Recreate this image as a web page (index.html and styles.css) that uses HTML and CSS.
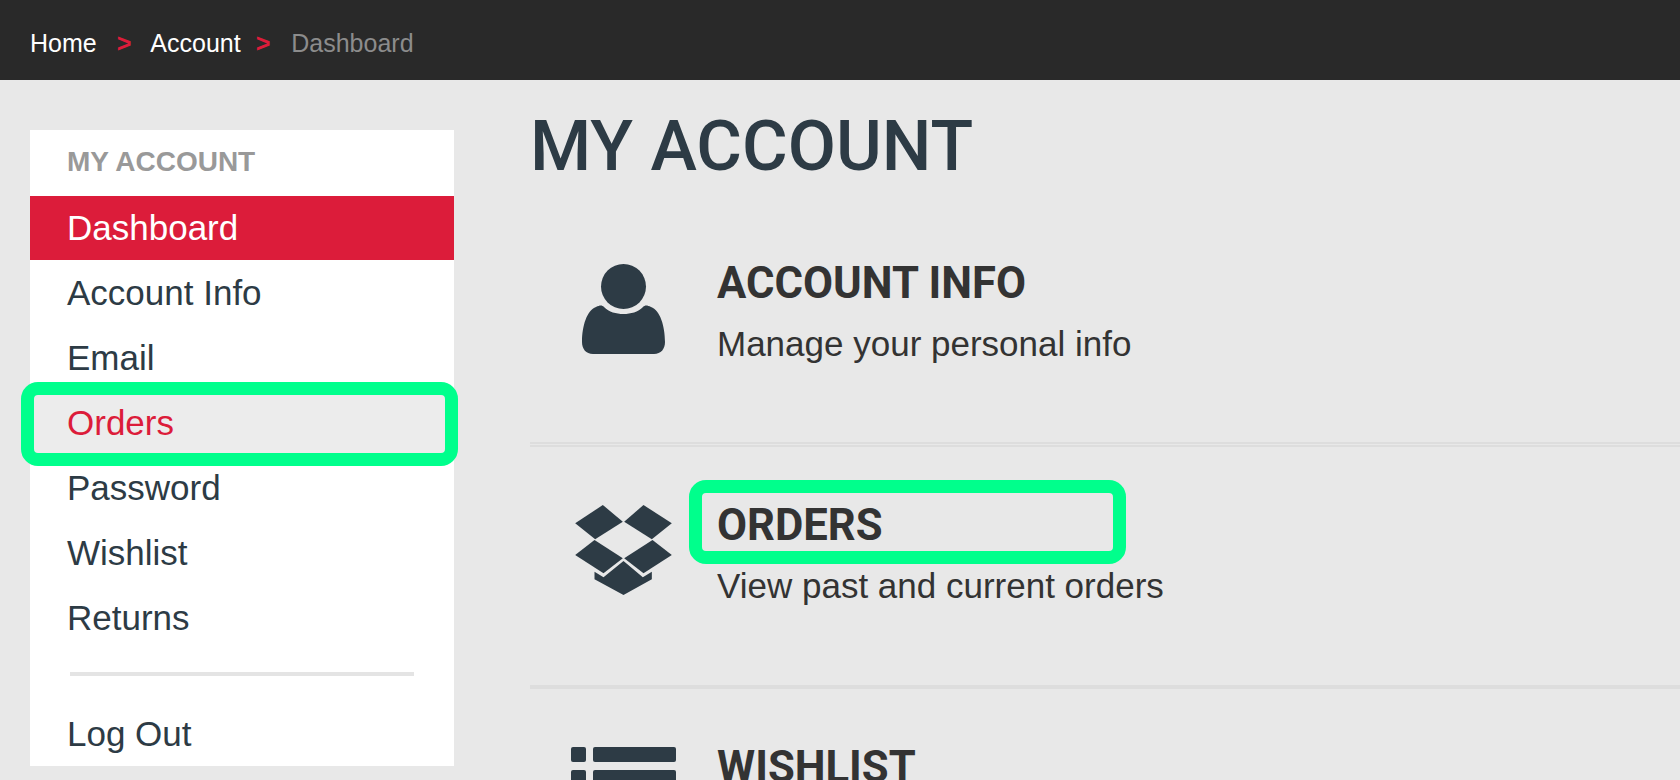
FILE: index.html
```html
<!DOCTYPE html>
<html lang="en">
<head>
  <meta charset="UTF-8" />
  <title>My Account</title>
  <link rel="stylesheet" href="styles.css">
</head>
<body>
  <nav class="breadcrumb">
    <a href="#" class="crumb crumb-home">Home</a>
    <span class="sep sep-first">&gt;</span>
    <a href="#" class="crumb">Account</a>
    <span class="sep sep-second">&gt;</span>
    <span class="crumb current">Dashboard</span>
  </nav>

  <div class="page">
    <aside class="sidebar">
      <div class="side-title">MY ACCOUNT</div>
      <a href="#" class="side-link active">Dashboard</a>
      <a href="#" class="side-link">Account Info</a>
      <a href="#" class="side-link">Email</a>
      <a href="#" class="side-link hover callout">Orders</a>
      <a href="#" class="side-link">Password</a>
      <a href="#" class="side-link">Wishlist</a>
      <a href="#" class="side-link">Returns</a>
      <hr class="side-rule" />
      <a href="#" class="side-link logout">Log Out</a>
    </aside>

    <main class="main">
      <h1>MY ACCOUNT</h1>

      <section class="feature double">
        <div class="feature-icon">
          <svg width="83" height="91" viewBox="0 -1 83 91">
            <ellipse cx="41.5" cy="22.5" rx="22.5" ry="22.5" />
            <path d="M0 78C0 62 5 46 14 43C18 41 20 41 22 43C27 48 34 50 41.5 50C49 50 56 48 61 43C63 41 65 41 69 43C78 46 83 62 83 78C83 85 79 90 72 90L11 90C4 90 0 85 0 78Z" />
          </svg>
        </div>
        <div class="feature-text">
          <h2>ACCOUNT INFO</h2>
          <p>Manage your personal info</p>
        </div>
      </section>

      <section class="feature">
        <div class="feature-icon">
          <svg width="97" height="90" viewBox="0 0 290 270">
            <path d="M0 55L83 0L143 50L60 103Z" />
            <path d="M147 50L205 0L290 55L230 103Z" />
            <path d="M58 105L143 160L85 205L0 150Z" />
            <path d="M232 105L290 150L205 205L147 160Z" />
            <path d="M145 168L203 217L230 200L230 223L145 270L58 223L58 200L85 217Z" />
          </svg>
        </div>
        <div class="feature-text">
          <h2 class="callout-title">ORDERS</h2>
          <p>View past and current orders</p>
        </div>
      </section>

      <section class="feature">
        <div class="feature-icon">
          <svg width="105" height="90" viewBox="0 0 105 90">
            <rect x="0" y="0" width="15" height="15" rx="2" />
            <rect x="22" y="0" width="83" height="15" rx="2" />
            <rect x="0" y="23" width="15" height="15" rx="2" />
            <rect x="22" y="23" width="83" height="15" rx="2" />
          </svg>
        </div>
        <div class="feature-text">
          <h2>WISHLIST</h2>
        </div>
      </section>
    </main>
  </div>
</body>
</html>
```

FILE: styles.css
```css
*, *::after {
  box-sizing: border-box;
}

html, body {
  height: 780px;
  overflow: hidden;
}

body {
  margin: 0;
  background: #e8e8e8;
  font-family: "Liberation Sans", Arial, sans-serif;
  color: #2d3b45;
}

a {
  text-decoration: none;
  color: inherit;
}

.breadcrumb {
  display: flex;
  align-items: center;
  height: 80px;
  padding: 6px 0 0 30px;
  background: #292929;
  font-size: 25px;
}

.crumb {
  color: #fff;
}

.crumb.current {
  color: #8c8c8c;
}

.sep {
  color: #dc1c3a;
  font-weight: bold;
  font-size: 25px;
}

.sep-first {
  margin: 0 19px 0 20px;
}

.sep-second {
  margin: 0 21px 0 15px;
}

.page {
  display: flex;
  align-items: flex-start;
  padding-left: 30px;
}

.sidebar {
  flex: 0 0 424px;
  height: 636px;
  margin-top: 50px;
  background: #fff;
}

.side-title {
  height: 66px;
  padding: 0 37px 3px;
  display: flex;
  align-items: center;
  font-size: 28px;
  font-weight: bold;
  color: #999;
}

.side-link {
  display: flex;
  align-items: center;
  position: relative;
  height: 65px;
  padding: 1px 37px 0;
  font-size: 35px;
}

.side-link.active {
  height: 64px;
  padding-top: 0;
  background: #dc1c3a;
  color: #fff;
}

.side-link.hover {
  background: #ececec;
  color: #dc1c3a;
}

.side-link.logout {
  height: 64px;
}

.side-rule {
  height: 4px;
  margin: 22px 40px 25px;
  border: 0;
  background: #e4e4e4;
}

/* green annotation rings */
.callout::after {
  content: "";
  position: absolute;
  top: -8px;
  left: -9px;
  width: 437px;
  height: 84px;
  border: 13px solid #00ff8c;
  border-radius: 17px;
}

.main {
  flex: 1;
  margin-left: 76px;
}

h1 {
  margin: 0;
  height: 125px;
  padding-top: 24px;
  font-family: Roboto, sans-serif;
  font-size: 70px;
  line-height: 84px;
  font-weight: 500;
}

.feature {
  display: flex;
  height: 242px;
  padding-top: 58px;
  border-bottom: 4px solid #ddd;
}

.feature.double {
  border-bottom: 5px double #ddd;
}

.feature-icon {
  flex: 0 0 187px;
  display: flex;
  justify-content: center;
  align-items: flex-start;
}

.feature-icon svg {
  fill: #2d3b45;
}

.feature-text h2 {
  position: relative;
  margin: -1px 0 0;
  height: 61px;
  font-family: Roboto, sans-serif;
  font-size: 43.6px;
  line-height: 44px;
  font-weight: 700;
  color: #333;
}

.feature-text p {
  margin: 0;
  font-size: 35px;
  line-height: 42px;
  color: #333;
}

.callout-title::after {
  content: "";
  position: absolute;
  top: -24px;
  left: -28px;
  width: 437px;
  height: 84px;
  border: 13px solid #00ff8c;
  border-radius: 17px;
}
```
